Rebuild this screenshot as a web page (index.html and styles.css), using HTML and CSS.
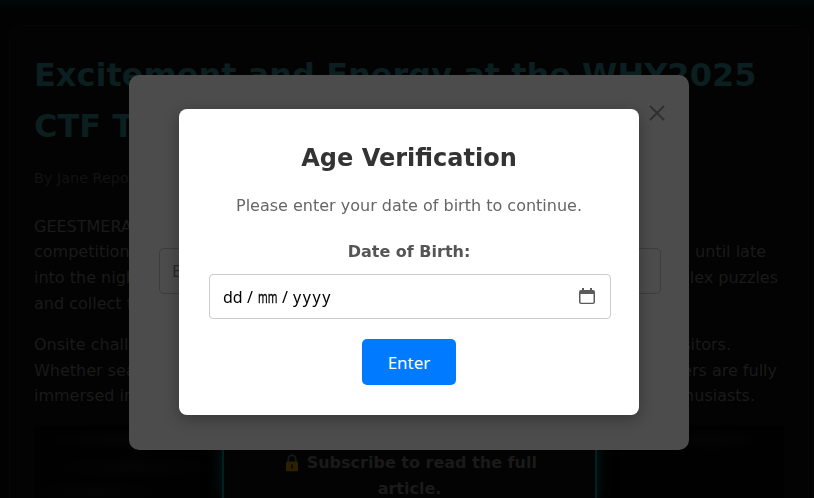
FILE: index.html
```html
<!DOCTYPE html>
<html lang="en">
<head>
<meta charset="utf-8">
<title>Age Verification</title>
<link rel="stylesheet" href="styles.css">
</head>
<body>
<article class="card">
  <h1>Excitement and Energy at the WHY2025 CTF Tent</h1>
  <p class="byline">By Jane Reporter</p>
  <div class="para">
    <div class="line"><span>GEESTMERAMBACHT</span></div>
    <div class="line end-18"><span>competition</span><span>until late</span></div>
    <div class="line end-6"><span>into the night</span><span>complex puzzles</span></div>
    <div class="line"><span>and collect flags</span></div>
  </div>
  <div class="para">
    <div class="line end-53"><span>Onsite challenges</span><span>visitors.</span></div>
    <div class="line end-7"><span>Whether seasoned</span><span>players are fully</span></div>
    <div class="line end-29"><span>immersed in</span><span>enthusiasts.</span></div>
  </div>
  <section class="locked">
    <div class="subscribe">
      <svg class="lock" viewBox="0 0 14 18"><path d="M3.3 8V5a3.7 3.7 0 0 1 7.4 0v3" fill="none" stroke="#10191b" stroke-width="1.8"/><rect x="1" y="7.5" width="12" height="9.7" rx="1" fill="#2c2003"/><path d="M6 10.5h2v4H6z" fill="#100b02"/></svg>
      Subscribe to read the full article.
    </div>
  </section>
</article>
<div class="layer">
  <div class="login">
    <svg class="close" viewBox="0 0 16 16"><path d="M1 1l14 14M15 1L1 15" stroke="#303030" stroke-width="2" fill="none"/></svg>
    <div class="email">Email</div>
  </div>
</div>
<div class="layer">
  <div class="dialog">
    <h2>Age Verification</h2>
    <p>Please enter your date of birth to continue.</p>
    <div class="label">Date of Birth:</div>
    <div class="date">
      <div class="parts"><span class="part">dd</span><span class="sep">/</span><span class="part month"><span>mm</span></span><span class="sep">/</span><span class="part year">yyyy</span></div>
      <svg class="calendar" viewBox="0 0 16 16"><path d="M3 0h2v2h6V0h2v2h1a2 2 0 0 1 2 2v10a2 2 0 0 1-2 2H2a2 2 0 0 1-2-2V4a2 2 0 0 1 2-2h1zM1.5 6v8q0 .7.7.7h11.6q.7 0 .7-.7V6z" fill="#5b5b5b" fill-rule="evenodd"/></svg>
    </div>
    <button>Enter</button>
  </div>
</div>
</body>
</html>
```
FILE: styles.css
```css
* { box-sizing: border-box; }
body {
  margin: 0;
  height: 498px;
  overflow: hidden;
  background: linear-gradient(#000908, #000202 10px, #020202 22px) #020202;
  font-family: "DejaVu Sans", sans-serif;
  font-size: 16px;
  line-height: 25.6px;
  color: #1a1a1a;
}
.card {
  width: 800px;
  height: 473px;
  margin: 25px 0 0 9px;
  padding: 24px 24px 0;
  border: 1px solid #060606;
  border-bottom: 0;
  border-radius: 12px 12px 0 0;
  background: #030303;
}
h1 {
  margin: 0 0 15px;
  font-size: 32px;
  line-height: 51.2px;
  color: #0b1e20;
}
.byline { margin: 0 0 23.4px; font-size: 14.4px; line-height: 23px; color: #121212; }
.para { margin-bottom: 15.8px; white-space: nowrap; }
.line { display: flex; justify-content: space-between; }
.end-18 { padding-right: 18px; }
.end-6 { padding-right: 6px; }
.end-53 { padding-right: 53px; }
.end-7 { padding-right: 7px; }
.end-29 { padding-right: 29px; }
.locked {
  display: flex;
  justify-content: center;
  height: 74px;
  /* faint smudges of the obscured paragraph */
  background:
    radial-gradient(ellipse 90px 11px at 90px 15px, #040404, transparent),
    radial-gradient(ellipse 90px 11px at 100px 42px, #040404, transparent),
    radial-gradient(ellipse 70px 11px at 60px 67px, #040404, transparent),
    radial-gradient(ellipse 60px 12px at 675px 15px, #040404, transparent),
    #010101;
}
.subscribe {
  width: 375px;
  padding: 23.4px 49px 0 50px;
  border: solid #022020;
  border-width: 2px 2px 0;
  box-shadow: 0 0 15px #011a19;
  background: #030303;
  text-align: center;
  font-weight: bold;
}
.lock { width: 14px; height: 18px; vertical-align: -4px; margin: 0 2px 0 3px; }
.layer {
  position: fixed;
  inset: 0 -4px 0 0;
  display: flex;
  align-items: center;
  justify-content: center;
}
.login {
  width: 560px;
  height: 375px;
  margin: 27px 0 0;
  padding: 30px;
  display: flex;
  flex-direction: column;
  border-radius: 10px;
  background: #4c4c4c;
}
.close { width: 16px; height: 16px; align-self: flex-end; margin-right: -6px; }
.email {
  width: 502px;
  height: 46px;
  margin-top: 127px;
  padding: 10px 12px;
  border: 1px solid #3d3d3d;
  border-radius: 5px;
  color: #292929;
}
.dialog {
  width: 460px;
  height: 306px;
  margin-top: 26px;
  padding: 30px;
  border-radius: 8px;
  background: #fff;
  box-shadow: 0 4px 15px rgba(0, 0, 0, .3);
  text-align: center;
}
h2 { margin: 0 0 16px; font-size: 24px; line-height: 38px; color: #333; }
p { margin: 0 0 20px; color: #666; }
.label { margin-bottom: 10px; font-weight: bold; color: #555; }
.date {
  display: flex;
  align-items: center;
  justify-content: space-between;
  width: 402px;
  height: 45px;
  padding: 0 15px 0 13px;
  border: 1px solid #ccc;
  border-radius: 4px;
  color: #000;
}
.parts { display: flex; padding-top: 2px; font-family: "Noto Sans", sans-serif; }
.part { width: 20px; text-align: left; }
.month span { display: inline-block; transform: scaleX(.65); transform-origin: left; -webkit-text-stroke: .3px #000; }
.year { width: auto; letter-spacing: 1.6px; }
.sep { width: 15px; text-align: center; padding-right: 1px; }
.calendar { width: 16px; height: 16px; margin-bottom: 2px; }
button {
  width: 94px;
  height: 46px;
  margin: 20px 0 0;
  padding: 0;
  border: 0;
  border-radius: 5px;
  background: #007bff;
  color: #fff;
  font: 17px/47px "Noto Sans", sans-serif;
}
```
